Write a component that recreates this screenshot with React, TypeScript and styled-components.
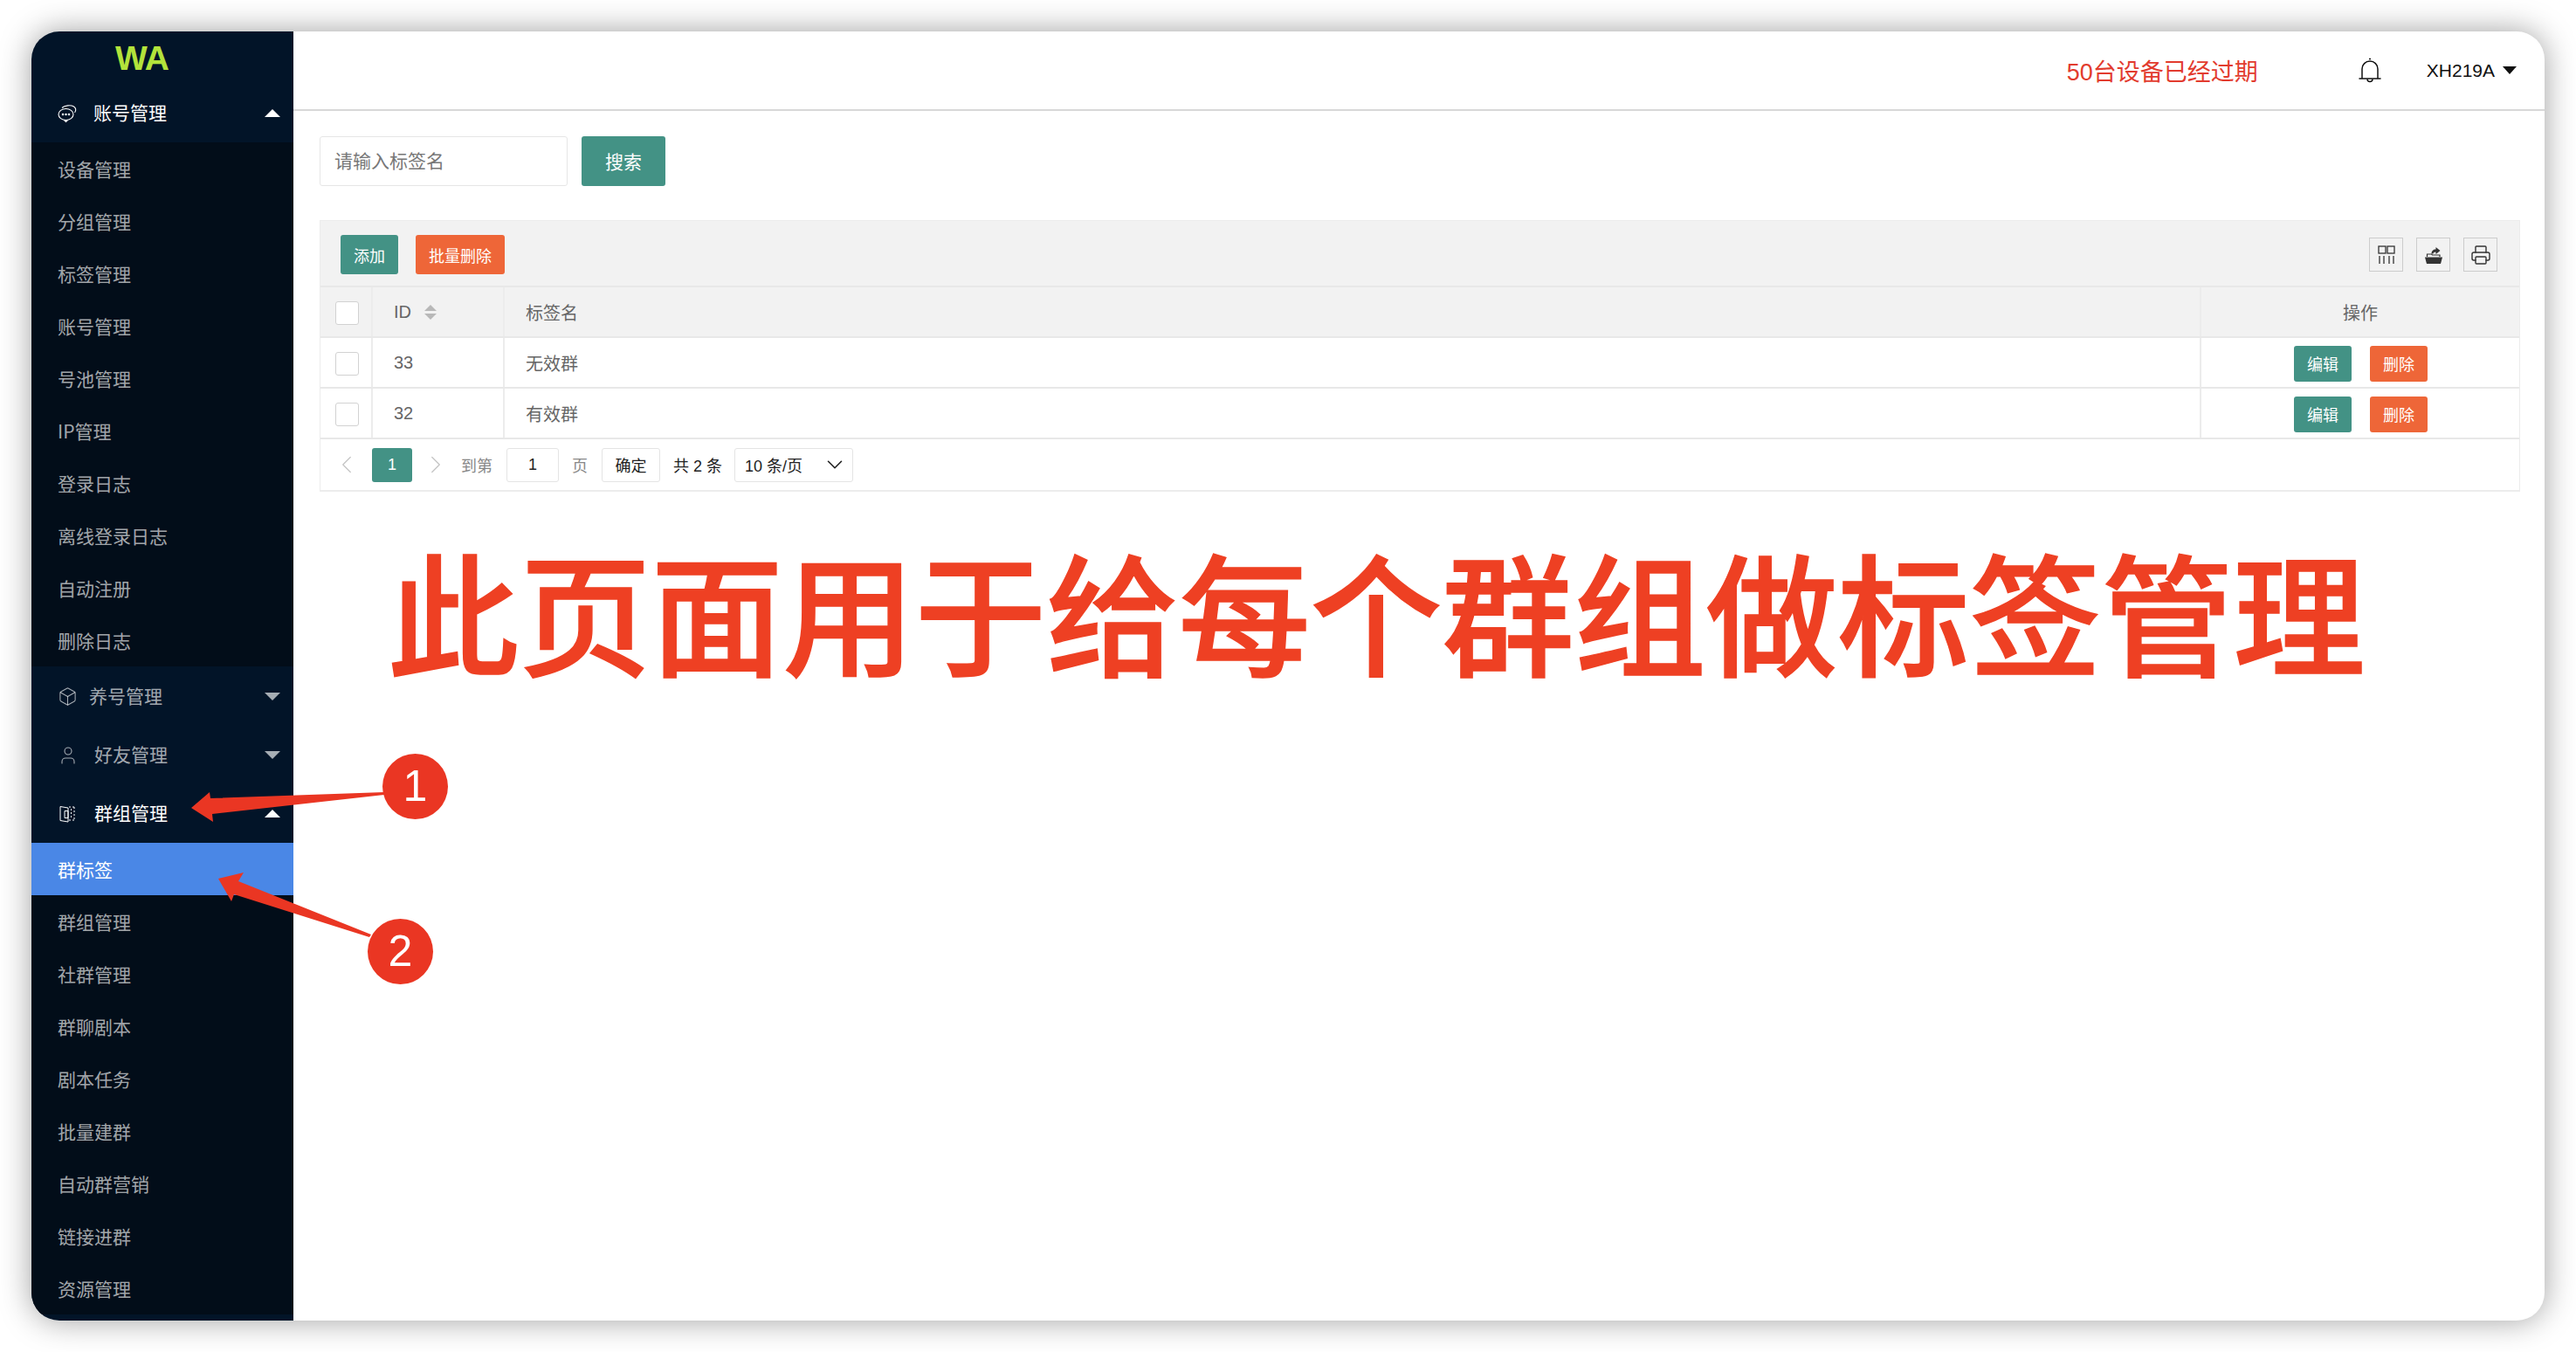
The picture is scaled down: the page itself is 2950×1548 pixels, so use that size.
import React from "react";
import styled, { createGlobalStyle } from "styled-components";
import { Box, ChevronDown, ChevronLeft, ChevronRight, Printer, User } from "lucide-react";

const GlobalStyle = createGlobalStyle`
  html, body {
    margin: 0;
    padding: 0;
    background: #fff;
    font-family: "Liberation Sans", "Noto Sans CJK SC", sans-serif;
  }
  * { box-sizing: border-box; }
`;

const Page = styled.div`
  position: relative;
  width: 2950px;
  height: 1548px;
  padding: 36px;
  overflow: hidden;
  background: #fff;
`;

const Window = styled.div`
  display: flex;
  width: 2878px;
  height: 1476px;
  border-radius: 32px;
  overflow: hidden;
  background: #fff;
  box-shadow: 0 0 36px rgba(0, 0, 0, 0.38);
`;

const Sidebar = styled.aside`
  width: 300px;
  flex: none;
  background: #021428;
  overflow: hidden;
`;

const Logo = styled.div`
  height: 60px;
  padding-left: 96px;
  color: #b3e33b;
  font-size: 39px;
  line-height: 62px;
  font-weight: 700;
  font-family: "Liberation Sans", sans-serif;
  letter-spacing: -1px;
`;

const GroupHead = styled.div<{ $open?: boolean; $h?: number }>`
  display: flex;
  align-items: center;
  height: ${(p) => p.$h ?? 67}px;
  padding: 0 15px 0 30px;
  color: ${(p) => (p.$open ? "#fff" : "rgba(255,255,255,0.65)")};
  font-size: 21px;
  font-family: "Noto Sans CJK SC", sans-serif;
  svg.icon { flex: none; }
`;

const GroupLabel = styled.span<{ $gap: number }>`
  margin: 0 0 3px ${(p) => p.$gap}px;
`;

const Caret = styled.i<{ $up?: boolean }>`
  margin-left: auto;
  width: 0;
  height: 0;
  border-left: 9px solid transparent;
  border-right: 9px solid transparent;
  ${(p) =>
    p.$up
      ? "border-bottom: 9px solid #fff;"
      : "border-top: 9px solid rgba(255,255,255,0.65);"}
`;

const SubList = styled.div`
  background: #020d19;
`;

const SubItem = styled.div<{ $active?: boolean }>`
  height: 60px;
  padding-left: 30px;
  line-height: 60px;
  font-size: 21px;
  font-family: "Noto Sans CJK SC", sans-serif;
  color: ${(p) => (p.$active ? "#fff" : "rgba(255,255,255,0.65)")};
  background: ${(p) => (p.$active ? "#4a87e6" : "transparent")};
`;

const Main = styled.main`
  flex: 1;
  min-width: 0;
  display: flex;
  flex-direction: column;
`;

const TopBar = styled.header`
  display: flex;
  align-items: center;
  height: 91px;
  padding: 0 32px 0 0;
  border-bottom: 2px solid #d8d8d8;
`;

const Expired = styled.span`
  margin-left: auto;
  color: #e23b2e;
  font-size: 27px;
`;

const BellBox = styled.span`
  display: flex;
  margin-left: 114px;
  color: #111;
`;

const UserName = styled.span`
  margin-left: 51px;
  font-size: 21px;
  color: #111;
`;

const UserCaret = styled.i`
  margin-left: 9px;
  width: 0;
  height: 0;
  border-left: 8px solid transparent;
  border-right: 8px solid transparent;
  border-top: 9px solid #111;
`;

const Content = styled.div`
  padding: 29px 28px 0 30px;
`;

const SearchRow = styled.div`
  display: flex;
  gap: 16px;
  margin-bottom: 39px;
`;

const SearchInput = styled.div`
  width: 284px;
  height: 57px;
  padding-left: 16px;
  line-height: 55px;
  border: 1px solid #e6e6e6;
  border-radius: 3px;
  color: #777;
  font-size: 21px;
`;

const Button = styled.button<{ $kind?: "green" | "orange"; $w: number; $h: number }>`
  width: ${(p) => p.$w}px;
  height: ${(p) => p.$h}px;
  padding: 0;
  border: 0;
  border-radius: 3px;
  color: #fff;
  font-family: inherit;
  font-size: 18px;
  background: ${(p) => (p.$kind === "orange" ? "#ee6638" : "#439285")};
`;

const SearchButton = styled(Button)`
  padding-bottom: 2px;
  font-size: 21px;
`;

const TableWrap = styled.section`
  border: 1px solid #ececec;
  border-bottom-width: 2px;
`;

const Toolbar = styled.div`
  display: flex;
  align-items: center;
  height: 76px;
  padding: 3px 25px 0 23px;
  background: #f2f2f2;
  border-bottom: 2px solid #e8e8e8;
  gap: 20px;
`;

const ToolIcons = styled.div`
  display: flex;
  gap: 15px;
  margin-left: auto;
`;

const ToolIcon = styled.span`
  display: flex;
  align-items: center;
  justify-content: center;
  width: 39px;
  height: 39px;
  border: 1px solid #ccc;
  color: #333;
`;

const Row = styled.div<{ $head?: boolean }>`
  display: grid;
  grid-template-columns: 60px 151px 1fr 364px;
  height: 58px;
  border-bottom: 2px solid #e8e8e8;
  background: ${(p) => (p.$head ? "#f2f2f2" : "#fff")};
  color: #666;
  font-size: 20px;
`;

const Cell = styled.div<{ $center?: boolean }>`
  display: flex;
  align-items: center;
  justify-content: ${(p) => (p.$center ? "center" : "flex-start")};
  padding-left: ${(p) => (p.$center ? 0 : 24)}px;
  gap: 10px;
  border-right: 2px solid #ececec;
  &:last-child { border-right: 0; }
`;

const CheckBox = styled.span`
  width: 27px;
  height: 27px;
  margin: 3px 0 0 3px;
  border: 1px solid #d2d2d2;
  border-radius: 3px;
  background: #fff;
`;

const Sort = styled.span`
  display: flex;
  flex-direction: column;
  gap: 3px;
  margin-left: 5px;
  i {
    width: 0;
    height: 0;
    border-left: 7px solid transparent;
    border-right: 7px solid transparent;
  }
  i:first-child { border-bottom: 7px solid #b8b8b8; }
  i:last-child { border-top: 7px solid #b8b8b8; }
`;

const RowActions = styled.div`
  display: flex;
  gap: 21px;
  padding: 2px 0 0 106px;
  align-items: center;
`;

const Pager = styled.div`
  display: flex;
  align-items: center;
  height: 58px;
  padding-left: 13px;
  color: #888;
  font-size: 18px;
`;

const PageCurrent = styled.span`
  width: 46px;
  height: 39px;
  margin-left: 12px;
  border-radius: 3px;
  background: #439285;
  color: #fff;
  text-align: center;
  line-height: 39px;
`;

const PageArrow = styled.span<{ $gap: number }>`
  display: flex;
  margin-left: ${(p) => p.$gap}px;
  color: #c4c4c4;
`;

const PagerText = styled.span<{ $gap: number; $dark?: boolean }>`
  margin-left: ${(p) => p.$gap}px;
  color: ${(p) => (p.$dark ? "#222" : "#888")};
`;

const PageBox = styled.span<{ $w: number; $gap: number }>`
  display: flex;
  align-items: center;
  justify-content: center;
  width: ${(p) => p.$w}px;
  height: 39px;
  margin-left: ${(p) => p.$gap}px;
  border: 1px solid #e4e4e4;
  border-radius: 3px;
  color: #222;
`;

const PageSize = styled(PageBox)`
  justify-content: space-between;
  padding: 0 5px 0 11px;
  svg { color: #222; }
`;

const BigNote = styled.div`
  position: absolute;
  left: 0;
  top: 597px;
  width: 3152px;
  text-align: center;
  color: #ee4023;
  font-size: 151px;
  line-height: 200px;
  font-weight: 500;
  -webkit-text-stroke: 1.5px #ee4023;
  font-family: "Noto Sans CJK SC", sans-serif;
  white-space: nowrap;
`;

const Arrows = styled.svg`
  position: absolute;
  left: 0;
  top: 0;
  pointer-events: none;
`;

const StepMark = styled.div<{ $x: number; $y: number }>`
  position: absolute;
  left: ${(p) => p.$x}px;
  top: ${(p) => p.$y}px;
  width: 75px;
  height: 75px;
  border-radius: 50%;
  background: #ea3623;
  color: #fff;
  text-align: center;
  font-size: 50px;
  line-height: 75px;
  font-family: "Liberation Sans", sans-serif;
`;

const ChatIcon = () => (
  <svg className="icon" width="22" height="22" viewBox="0 0 22 22" fill="none" stroke="currentColor" strokeWidth="1.1">
    <ellipse cx="9.5" cy="12" rx="8.5" ry="6.5" />
    <path d="M7.5 18.5l2 2 2-2" />
    <path d="M5 4.5C8 1.5 15 1 18.5 3c2.5 1.5 3 4.5 1 7" />
    <circle cx="6" cy="12" r=".7" fill="currentColor" />
    <circle cx="9.5" cy="12" r=".7" fill="currentColor" />
    <circle cx="13" cy="12" r=".7" fill="currentColor" />
  </svg>
);

const GroupIcon = () => (
  <svg className="icon" width="22" height="22" viewBox="0 0 22 22" fill="none" stroke="currentColor" strokeWidth="1">
    <path d="M3 2.5l9 1.5v16l-9-1.5z" />
    <path d="M8 7.5h4v8H8z" />
    <path d="M13 3h6M19 3v15M13 18h6" strokeDasharray="2 2" />
    <path d="M15.5 5v11" strokeDasharray="2 2" />
  </svg>
);

const BellIcon = () => (
  <svg width="28" height="30" viewBox="0 0 28 30" fill="none" stroke="currentColor" strokeWidth="1.5">
    <path d="M2 24h24" strokeLinecap="round" />
    <path d="M5 24V13c0-5 4-9 9-9s9 4 9 9v11" />
    <path d="M13 1.5h2" />
    <path d="M11 24.5a3 3 0 0 0 6 0" />
  </svg>
);

const ColumnsIcon = () => (
  <svg width="20" height="21" viewBox="0 0 20 21" fill="none" stroke="currentColor" strokeWidth="1.3">
    <rect x="1" y="1" width="8" height="8" />
    <rect x="11" y="1" width="8" height="8" />
    <path d="M2 12v9M7 12v9M13 12v9M18 12v9" />
  </svg>
);

const ExportIcon = () => (
  <svg width="20" height="20" viewBox="0 0 20 20" fill="currentColor">
    <path d="M2.5 12V9h5l1 1h8.5v2" fill="none" stroke="currentColor" strokeWidth="1.2" />
    <path d="M7.5 8.5c0-3 2-5 5-5V1l5 4-5 4V6.5c-2 0-3 .8-3 2z" />
    <path d="M0 12.5h20l-2 7.5H2z" />
  </svg>
);

const accountItems = ["设备管理", "分组管理", "标签管理", "账号管理", "号池管理", "IP管理", "登录日志", "离线登录日志", "自动注册", "删除日志"];
const groupItems = ["群组管理", "社群管理", "群聊剧本", "剧本任务", "批量建群", "自动群营销", "链接进群", "资源管理"];
const rows = [
  { id: 33, name: "无效群" },
  { id: 32, name: "有效群" },
];

export default function App() {
  return (
    <Page>
      <GlobalStyle />
      <Window>
        <Sidebar>
          <Logo>WA</Logo>
          <GroupHead $open>
            <ChatIcon />
            <GroupLabel $gap={19}>账号管理</GroupLabel>
            <Caret $up />
          </GroupHead>
          <SubList>
            {accountItems.map((item) => (
              <SubItem key={item}>{item}</SubItem>
            ))}
          </SubList>
          <GroupHead $h={68}>
            <Box className="icon" size={23} strokeWidth={1.1} />
            <GroupLabel $gap={13}>养号管理</GroupLabel>
            <Caret />
          </GroupHead>
          <GroupHead>
            <User className="icon" size={24} strokeWidth={1.1} />
            <GroupLabel $gap={18}>好友管理</GroupLabel>
            <Caret />
          </GroupHead>
          <GroupHead $open>
            <GroupIcon />
            <GroupLabel $gap={20}>群组管理</GroupLabel>
            <Caret $up />
          </GroupHead>
          <SubList>
            <SubItem $active>群标签</SubItem>
            {groupItems.map((item) => (
              <SubItem key={item}>{item}</SubItem>
            ))}
          </SubList>
        </Sidebar>
        <Main>
          <TopBar>
            <Expired>50台设备已经过期</Expired>
            <BellBox>
              <BellIcon />
            </BellBox>
            <UserName>XH219A</UserName>
            <UserCaret />
          </TopBar>
          <Content>
            <SearchRow>
              <SearchInput>请输入标签名</SearchInput>
              <SearchButton $w={96} $h={57}>搜索</SearchButton>
            </SearchRow>
            <TableWrap>
              <Toolbar>
                <Button $w={66} $h={45}>添加</Button>
                <Button $kind="orange" $w={102} $h={45}>批量删除</Button>
                <ToolIcons>
                  <ToolIcon><ColumnsIcon /></ToolIcon>
                  <ToolIcon><ExportIcon /></ToolIcon>
                  <ToolIcon><Printer size={24} strokeWidth={1.4} /></ToolIcon>
                </ToolIcons>
              </Toolbar>
              <Row $head>
                <Cell $center><CheckBox /></Cell>
                <Cell>ID<Sort><i /><i /></Sort></Cell>
                <Cell>标签名</Cell>
                <Cell $center>操作</Cell>
              </Row>
              {rows.map((row) => (
                <Row key={row.id}>
                  <Cell $center><CheckBox /></Cell>
                  <Cell>{row.id}</Cell>
                  <Cell>{row.name}</Cell>
                  <RowActions>
                    <Button $w={66} $h={41}>编辑</Button>
                    <Button $kind="orange" $w={66} $h={41}>删除</Button>
                  </RowActions>
                </Row>
              ))}
              <Pager>
                <PageArrow $gap={0}><ChevronLeft size={34} strokeWidth={0.9} /></PageArrow>
                <PageCurrent>1</PageCurrent>
                <PageArrow $gap={10}><ChevronRight size={34} strokeWidth={0.9} /></PageArrow>
                <PagerText $gap={12}>到第</PagerText>
                <PageBox $w={60} $gap={16}>1</PageBox>
                <PagerText $gap={15}>页</PagerText>
                <PageBox $w={67} $gap={16}>确定</PageBox>
                <PagerText $gap={15} $dark>共 2 条</PagerText>
                <PageSize $w={136} $gap={14}>10 条/页<ChevronDown size={30} strokeWidth={1.3} /></PageSize>
              </Pager>
            </TableWrap>
          </Content>
        </Main>
      </Window>
      <BigNote>此页面用于给每个群组做标签管理</BigNote>
      <Arrows width="2950" height="1548" viewBox="0 0 2950 1548">
        <polygon points="219,925 240,907 241,914 440,907 440,910 243,932 244,941" fill="#ea3623" />
        <polygon points="250,1006 279,999 273,1009 425,1070 423,1073 268,1024 265,1032" fill="#ea3623" />
      </Arrows>
      <StepMark $x={438} $y={863}>1</StepMark>
      <StepMark $x={421} $y={1052}>2</StepMark>
    </Page>
  );
}
